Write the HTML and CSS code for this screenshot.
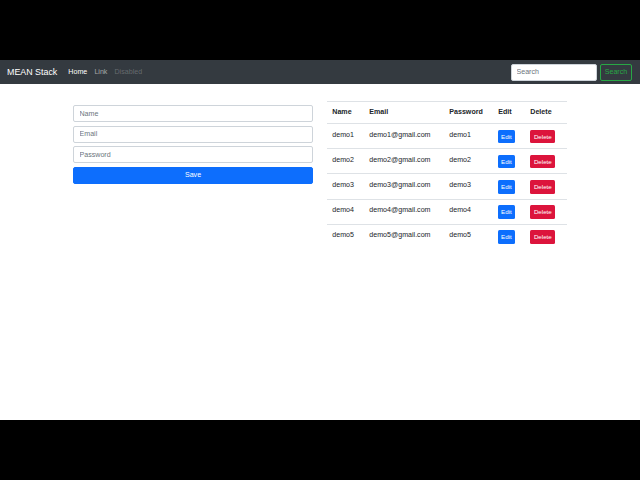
FILE: index.html
```html
<!DOCTYPE html>
<html>
<head>
<meta charset="utf-8">
<link rel="stylesheet" href="styles.css">
</head>
<body>
<div class="screen">
  <nav class="navbar">
    <span class="brand">MEAN Stack</span>
    <ul class="nav">
      <li class="nav-link active">Home</li>
      <li class="nav-link">Link</li>
      <li class="nav-link disabled">Disabled</li>
    </ul>
    <form class="search">
      <input class="search-input" type="text" placeholder="Search">
      <button class="btn-outline-success" type="button">Search</button>
    </form>
  </nav>
  <main class="container">
    <div class="col">
      <form class="user-form">
        <input class="form-control" type="text" placeholder="Name">
        <input class="form-control" type="text" placeholder="Email">
        <input class="form-control" type="password" placeholder="Password">
        <button class="btn-save" type="button">Save</button>
      </form>
    </div>
    <div class="col">
      <table class="table">
        <colgroup>
          <col class="c-name"><col class="c-email"><col class="c-pass"><col class="c-edit"><col class="c-del">
        </colgroup>
        <thead>
          <tr><th>Name</th><th>Email</th><th>Password</th><th>Edit</th><th>Delete</th></tr>
        </thead>
        <tbody>
          <tr><td>demo1</td><td>demo1@gmail.com</td><td>demo1</td><td><button class="btn-edit" type="button">Edit</button></td><td><button class="btn-del" type="button">Delete</button></td></tr>
          <tr><td>demo2</td><td>demo2@gmail.com</td><td>demo2</td><td><button class="btn-edit" type="button">Edit</button></td><td><button class="btn-del" type="button">Delete</button></td></tr>
          <tr><td>demo3</td><td>demo3@gmail.com</td><td>demo3</td><td><button class="btn-edit" type="button">Edit</button></td><td><button class="btn-del" type="button">Delete</button></td></tr>
          <tr><td>demo4</td><td>demo4@gmail.com</td><td>demo4</td><td><button class="btn-edit" type="button">Edit</button></td><td><button class="btn-del" type="button">Delete</button></td></tr>
          <tr><td>demo5</td><td>demo5@gmail.com</td><td>demo5</td><td><button class="btn-edit" type="button">Edit</button></td><td><button class="btn-del" type="button">Delete</button></td></tr>
        </tbody>
      </table>
    </div>
  </main>
</div>
</body>
</html>
```

FILE: styles.css
```css
* { box-sizing: border-box; }
html, body {
  margin: 0;
  padding: 0;
  background: #000;
  width: 640px;
  height: 480px;
  overflow: hidden;
}
body {
  font-family: "Liberation Sans", Arial, sans-serif;
  color: #212529;
  padding-top: 60px;
}
.screen {
  height: 360px;
  background: #fff;
}
.navbar {
  height: 24px;
  background: #343a40;
  display: flex;
  align-items: center;
  padding: 0 8px 0 7px;
}
.brand {
  color: #fff;
  font-size: 8.9px;
  margin-right: 7.5px;
  line-height: 1;
}
.nav {
  list-style: none;
  margin: 0;
  padding: 0;
  display: flex;
  flex: 1;
}
.nav-link {
  font-size: 7.1px;
  padding: 0 3.55px;
  color: rgba(255,255,255,.55);
}
.nav-link.active { color: #fff; }
.nav-link.disabled { color: rgba(255,255,255,.25); }
.search {
  display: flex;
  align-items: center;
  margin: 0;
}
.search-input {
  width: 86px;
  height: 17px;
  border: 1px solid #ced4da;
  border-radius: 2px;
  background: #fff;
  font-family: inherit;
  font-size: 7.1px;
  padding: 0 5px;
  margin: 0 3.5px 0 0;
  outline: none;
}
.search-input::placeholder { color: #6c757d; }
.btn-outline-success {
  width: 32px;
  height: 17px;
  padding: 0;
  border: 1px solid #28a745;
  border-radius: 2px;
  background: transparent;
  color: #28a745;
  font-family: inherit;
  font-size: 7.1px;
}
.container {
  width: 494px;
  margin: 0 auto;
  padding-top: 17px;
  display: flex;
  gap: 14px;
}
.col {
  width: 240px;
}
.user-form {
  margin-top: 4px;
  display: flex;
  flex-direction: column;
  gap: 3.5px;
}
.form-control {
  display: block;
  width: 100%;
  height: 17px;
  margin: 0;
  border: 1px solid #ced4da;
  border-radius: 2px;
  font-family: inherit;
  font-size: 7.1px;
  padding: 0 5.5px;
  color: #495057;
  outline: none;
}
.form-control::placeholder { color: #6c757d; }
.btn-save {
  display: block;
  width: 100%;
  height: 17px;
  padding: 0;
  border: 1px solid #0d6efd;
  border-radius: 2px;
  background: #0d6efd;
  color: #fff;
  font-family: inherit;
  font-size: 7.1px;
}
.table {
  width: 240px;
  border-collapse: collapse;
  table-layout: fixed;
  font-size: 7.1px;
  line-height: 10.7px;
}
.c-name { width: 37px; }
.c-email { width: 80px; }
.c-pass { width: 49px; }
.c-edit { width: 32px; }
.c-del { width: 42px; }
.table th, .table td {
  padding: 5.3px;
  text-align: left;
  vertical-align: top;
  border-top: 1px solid #dee2e6;
  white-space: nowrap;
}
.table th {
  font-weight: bold;
  border-bottom: 1px solid #dee2e6;
}
.table td { padding: 5.3px 5.3px 5.0px; }
.table td:nth-child(4) { padding-left: 4.5px; }
.btn-edit, .btn-del {
  display: block;
  height: 13.8px;
  padding: 0 3.6px;
  border: 0;
  border-radius: 1.5px;
  color: #fff;
  font-family: inherit;
  font-size: 6.2px;
  line-height: 13.8px;
}
.btn-edit { background: #0d6efd; }
.btn-del { background: #dc143c; }
```
